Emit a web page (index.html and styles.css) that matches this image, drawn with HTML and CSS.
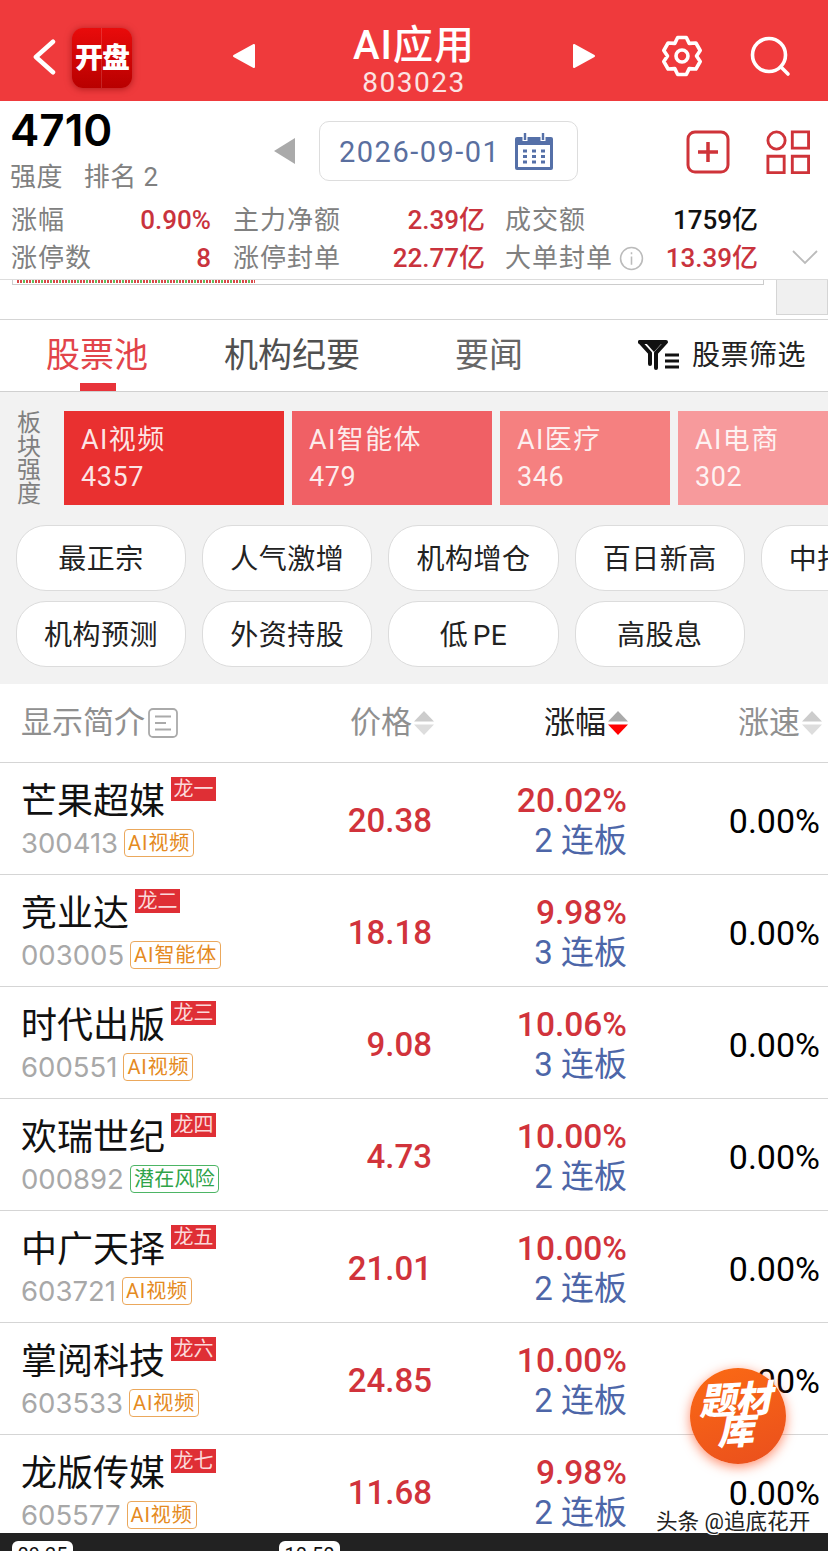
FILE: index.html
```html
<!DOCTYPE html>
<html lang="zh">
<head>
<meta charset="utf-8">
<title>AI应用</title>
<link rel="stylesheet" href="styles.css">
</head>
<body>
<div class="page">
  <header class="topbar">
    <svg class="back" viewBox="0 0 28 40"><path d="M24 3 5 20l19 17" fill="none" stroke="#fff" stroke-width="5" stroke-linecap="round" stroke-linejoin="round"/></svg>
    <div class="logo"><span>开盘</span></div>
    <svg class="tri tri-l" viewBox="0 0 24 26"><path d="M22 2v22L2 13z" fill="#fff" stroke="#fff" stroke-width="2" stroke-linejoin="round"/></svg>
    <div class="title"><div class="title-main">AI应用</div><div class="title-code">803023</div></div>
    <svg class="tri tri-r" viewBox="0 0 24 26"><path d="M2 2v22l20-11z" fill="#fff" stroke="#fff" stroke-width="2" stroke-linejoin="round"/></svg>
    <svg class="gear" viewBox="-22 -22 44 44"><path d="M4.300-18.500 7.200-12.600 13.900-13 18.200-5.500 14.500 0 18.200 5.500 13.900 13 7.200 12.600 4.300 18.500-4.300 18.500-7.200 12.600-13.900 13-18.200 5.500-14.500 0-18.200-5.500-13.900-13-7.200-12.600-4.300-18.500Z" fill="none" stroke="#fff" stroke-width="3.600" stroke-linejoin="round"/><circle r="6" fill="none" stroke="#fff" stroke-width="3.600"/></svg>
    <svg class="search" viewBox="0 0 42 42"><circle cx="19" cy="19" r="16.500" fill="none" stroke="#fff" stroke-width="3.600"/><path d="m31 31 7 7" stroke="#fff" stroke-width="3.600" stroke-linecap="round"/></svg>
  </header>

  <section class="info">
    <div class="info-top">
      <div class="score">
        <div class="score-num">4710</div>
        <div class="score-sub"><span>强度</span><span>排名 2</span></div>
      </div>
      <svg class="date-prev" viewBox="0 0 24 28"><path d="M22 1v26L1 14z" fill="#aaa"/></svg>
      <div class="date">
        <span>2026-09-01</span>
        <svg class="cal" viewBox="0 0 40 38"><path d="M3 5h34a2 2 0 0 1 2 2v29a2 2 0 0 1-2 2H3a2 2 0 0 1-2-2V7a2 2 0 0 1 2-2z" fill="#5570a8"/><rect x="4" y="13" width="32" height="22" fill="#fff"/><path d="M11 1v8M29 1v8" stroke="#fff" stroke-width="5"/><path d="M11 1v7M29 1v7" stroke="#5570a8" stroke-width="2.400"/><path d="M9 19h4M18 19h4M27 19h4M9 24.500h4M18 24.500h4M27 24.500h4M9 30h4M18 30h4M27 30h4" stroke="#5570a8" stroke-width="3"/></svg>
      </div>
      <svg class="add" viewBox="0 0 44 44"><rect x="2" y="2" width="40" height="40" rx="7" fill="none" stroke="#cf3339" stroke-width="3"/><path d="M12 22h20M22 12v20" stroke="#cf3339" stroke-width="3.500"/></svg>
      <svg class="apps" viewBox="0 0 46 46"><circle cx="11" cy="11" r="9" fill="none" stroke="#cf3339" stroke-width="3"/><path d="M27.500 2h17v17h-17zM2 27.500h17v17H2zM27.500 27.500h17v17h-17z" fill="none" stroke="#cf3339" stroke-width="3"/></svg>
    </div>
    <div class="stats-row">
      <div class="stats">
        <div class="stat"><span>涨幅</span><b>0.90%</b></div>
        <div class="stat"><span>主力净额</span><b>2.39亿</b></div>
        <div class="stat"><span>成交额</span><b class="black">1759亿</b></div>
        <div class="stat"><span>涨停数</span><b>8</b></div>
        <div class="stat"><span>涨停封单</span><b>22.77亿</b></div>
        <div class="stat"><span class="with-i">大单封单<svg class="i" viewBox="0 0 24 24"><circle cx="12" cy="12" r="10.500" fill="none" stroke="#bbb" stroke-width="1.500"/><path d="M12 10v8M12 6v2" stroke="#bbb" stroke-width="1.500"/></svg></span><b>13.39亿</b></div>
      </div>
      <svg class="chev" viewBox="0 0 26 16"><path d="m1 2 12 12L25 2" fill="none" stroke="#bbb" stroke-width="1.800"/></svg>
    </div>
  </section>

  <section class="strip">
    <div class="strip-chart"><div class="dots"></div></div>
    <div class="strip-box"></div>
  </section>

  <nav class="tabs">
    <div class="tab tab-a">股票池</div>
    <div class="tab tab-b">机构纪要</div>
    <div class="tab tab-c">要闻</div>
    <div class="filter">
      <svg class="filter-i" viewBox="0 0 42 32"><path d="M2 2h26L18 13v15" fill="none" stroke="#111" stroke-width="4" stroke-linejoin="round" stroke-linecap="round"/><path d="M2 2l10 11v11" fill="none" stroke="#111" stroke-width="4" stroke-linejoin="round" stroke-linecap="round"/><path d="M8 3h16l-8 9z" fill="#111"/><path d="M27 15h14M27 21h14M27 27h14" stroke="#111" stroke-width="2.800"/></svg>
      <span>股票筛选</span>
    </div>
  </nav>

  <section class="board">
    <div class="sectors">
      <div class="sector-label">板块强度</div>
      <div class="tile t1"><span class="tile-n">AI视频</span><span>4357</span></div>
      <div class="tile t2"><span class="tile-n">AI智能体</span><span>479</span></div>
      <div class="tile t3"><span class="tile-n">AI医疗</span><span>346</span></div>
      <div class="tile t4"><span class="tile-n">AI电商</span><span>302</span></div>
    </div>
    <div class="pills">
      <div class="pill">最正宗</div><div class="pill">人气激增</div><div class="pill">机构增仓</div><div class="pill">百日新高</div><div class="pill">中报预增</div>
    </div>
    <div class="pills">
      <div class="pill">机构预测</div><div class="pill">外资持股</div><div class="pill pill-pe">低 PE</div><div class="pill">高股息</div>
    </div>
  </section>

  <div class="thead">
    <div class="th th-name"><span>显示简介</span><svg class="list-i" viewBox="0 0 30 30"><rect x="1" y="1" width="28" height="28" rx="4" fill="none" stroke="#aaa" stroke-width="1.800"/><path d="M7 8.500h16M7 15h11M7 21.500h16" stroke="#aaa" stroke-width="1.800"/></svg></div>
    <div class="th"><span>价格</span><svg class="sort" viewBox="0 0 20 24"><path d="M10 0l10 10.500H0z" fill="#ccc"/><path d="M10 24 0 13.500h20z" fill="#ddd"/></svg></div>
    <div class="th th-on"><span>涨幅</span><svg class="sort" viewBox="0 0 20 24"><path d="M10 0l10 10.500H0z" fill="#aaa"/><path d="M10 24 0 13.500h20z" fill="#f00"/></svg></div>
    <div class="th"><span>涨速</span><svg class="sort" viewBox="0 0 20 24"><path d="M10 0l10 10.500H0z" fill="#ccc"/><path d="M10 24 0 13.500h20z" fill="#ddd"/></svg></div>
  </div>

  <div class="list">
    <div class="row">
      <div class="name"><div class="name-line"><span class="n">芒果超媒</span><span class="rank">龙一</span></div><div class="code-line"><span class="code">300413</span><span class="tag">AI视频</span></div></div>
      <div class="price">20.38</div>
      <div class="chg"><div>20.02%</div><div class="boards">2 连板</div></div>
      <div class="speed">0.00%</div>
    </div>
    <div class="row">
      <div class="name"><div class="name-line"><span class="n">竞业达</span><span class="rank">龙二</span></div><div class="code-line"><span class="code">003005</span><span class="tag">AI智能体</span></div></div>
      <div class="price">18.18</div>
      <div class="chg"><div>9.98%</div><div class="boards">3 连板</div></div>
      <div class="speed">0.00%</div>
    </div>
    <div class="row">
      <div class="name"><div class="name-line"><span class="n">时代出版</span><span class="rank">龙三</span></div><div class="code-line"><span class="code">600551</span><span class="tag">AI视频</span></div></div>
      <div class="price">9.08</div>
      <div class="chg"><div>10.06%</div><div class="boards">3 连板</div></div>
      <div class="speed">0.00%</div>
    </div>
    <div class="row">
      <div class="name"><div class="name-line"><span class="n">欢瑞世纪</span><span class="rank">龙四</span></div><div class="code-line"><span class="code">000892</span><span class="tag tag-green">潜在风险</span></div></div>
      <div class="price">4.73</div>
      <div class="chg"><div>10.00%</div><div class="boards">2 连板</div></div>
      <div class="speed">0.00%</div>
    </div>
    <div class="row">
      <div class="name"><div class="name-line"><span class="n">中广天择</span><span class="rank">龙五</span></div><div class="code-line"><span class="code">603721</span><span class="tag">AI视频</span></div></div>
      <div class="price">21.01</div>
      <div class="chg"><div>10.00%</div><div class="boards">2 连板</div></div>
      <div class="speed">0.00%</div>
    </div>
    <div class="row">
      <div class="name"><div class="name-line"><span class="n">掌阅科技</span><span class="rank">龙六</span></div><div class="code-line"><span class="code">603533</span><span class="tag">AI视频</span></div></div>
      <div class="price">24.85</div>
      <div class="chg"><div>10.00%</div><div class="boards">2 连板</div></div>
      <div class="speed">0.00%</div>
    </div>
    <div class="row">
      <div class="name"><div class="name-line"><span class="n">龙版传媒</span><span class="rank">龙七</span></div><div class="code-line"><span class="code">605577</span><span class="tag">AI视频</span></div></div>
      <div class="price">11.68</div>
      <div class="chg"><div>9.98%</div><div class="boards">2 连板</div></div>
      <div class="speed">0.00%</div>
    </div>
  </div>

  <footer class="bottom">
    <span class="time t-a">09:25</span>
    <span class="time t-b">10:50</span>
  </footer>

  <div class="fab"><span>题材</span><span>库</span></div>
  <div class="mark">头条 @追底花开</div>
</div>
</body>
</html>
```
FILE: styles.css
```css
* { box-sizing: border-box; }
html, body { margin: 0; padding: 0; }
body { background: #fff; font-family: "Roboto", "Noto Sans CJK SC", sans-serif; color: #111; }
.page { position: relative; width: 828px; height: 1551px; overflow: hidden; display: flex; flex-direction: column; }

/* top bar */
.topbar { position: relative; flex: none; height: 101px; background: #ef3a3c; display: flex; align-items: center; }
.back { width: 26px; height: 36px; margin: 13px 0 0 31px; flex: none; }
.logo { width: 60px; height: 60px; margin: 14px 0 0 15px; padding-bottom: 4px; flex: none; border-radius: 11px; background: linear-gradient(90deg, transparent 29px, rgba(255,255,255,.14) 29px 30px, transparent 30px), linear-gradient(#e90b0b, #b80000); box-shadow: 0 1px 7px rgba(120,0,0,.55); display: flex; align-items: center; justify-content: center; }
.logo span { color: #fff; font-size: 28px; font-weight: 900; letter-spacing: -1px; white-space: nowrap; }
.tri { width: 24px; height: 26px; flex: none; margin-top: 11px; }
.tri-l { margin-left: 100px; }
.title { width: 316px; flex: none; color: #fff; text-align: center; padding-top: 19px; }
.title-main { font-size: 40px; line-height: 45px; font-weight: 500; letter-spacing: 1px; }
.title-code { font-size: 28px; line-height: 30px; letter-spacing: 1.500px; color: #fbe3e3; }
.gear { width: 44px; height: 44px; flex: none; margin: 11px 0 0 64px; }
.search { width: 42px; height: 42px; flex: none; margin: 13px 0 0 46px; }

/* summary */
.info { flex: none; height: 178px; display: flex; flex-direction: column; }
.info-top { height: 100px; display: flex; align-items: flex-start; }
.score { width: 262px; flex: none; padding-left: 10px; }
.score-num { font-family: "Inter", "Roboto", sans-serif; font-size: 44px; line-height: 52px; font-weight: 600; color: #000; margin-top: 3px; }
.score-sub { display: flex; gap: 21px; font-size: 26px; line-height: 36px; color: #808080; margin-top: 3px; letter-spacing: .4px; }
.date-prev { width: 24px; height: 28px; flex: none; margin: 36px 0 0 11px; }
.date { width: 259px; height: 60px; margin: 20px 0 0 22px; padding: 1px 0 0 19px; flex: none; border: 1px solid #ddd; border-radius: 10px; display: flex; align-items: center; color: #5a6f9f; font-size: 29px; letter-spacing: 1.500px; }
.cal { width: 40px; height: 38px; margin: -1px 0 0 14px; flex: none; }
.add { width: 44px; height: 44px; flex: none; margin: 29px 0 0 108px; }
.apps { width: 44px; height: 44px; flex: none; margin: 29px 0 0 36px; }
.stats-row { display: flex; align-items: flex-start; }
.stats { margin: 1px 0 0 11px; display: grid; grid-template-columns: 222px 272px 253px; flex: none; }
.stat { height: 37.500px; display: flex; justify-content: space-between; align-items: center; font-size: 26px; line-height: 37px; }
.stat:nth-child(3n+1) { padding-right: 22px; }
.stat:nth-child(3n+2) { padding-right: 20px; }
.stat span { color: #808080; letter-spacing: 1px; }
.stat b { color: #c9333d; font-weight: 500; }
.stat b.black { color: #111; }
.with-i { display: flex; align-items: center; gap: 6px; }
.i { width: 25px; height: 25px; flex: none; }
.chev { width: 26px; height: 16px; flex: none; margin: 48px 0 0 34px; }

/* chart strip */
.strip { flex: none; height: 41px; border-top: 1px solid #ddd; border-bottom: 1px solid #d5d5d5; display: flex; align-items: flex-start; }
.strip-chart { width: 752px; height: 5px; margin-left: 12px; border: 1px solid #ccc; border-top: 0; flex: none; }
.dots { width: 238px; height: 3px; margin-left: 4px; background: repeating-linear-gradient(90deg, #d94848 0 2px, #fff 2px 3px, #d94848 3px 5px, #fff 5px 6px, #5cc05c 6px 8px, #fff 8px 9px); }
.strip-box { width: 52px; height: 35px; margin-left: 12px; background: #f0f0f0; border: 1px solid #d5d5d5; border-top: 0; flex: none; }

/* tabs */
.tabs { flex: none; height: 72px; border-bottom: 1px solid #d0d0d0; display: flex; align-items: flex-start; }
.tab { font-size: 34px; line-height: 70px; height: 71px; color: #505050; flex: none; }
.tab-a { margin-left: 46px; color: #e2444a; position: relative; }
.tab-a::after { content: ""; position: absolute; left: 34px; right: 32px; bottom: 0; height: 8px; background: #e8333a; }
.tab-b { margin-left: 76px; }
.tab-c { margin-left: 95px; color: #666; }
.filter { margin-left: 115px; height: 71px; display: flex; align-items: center; gap: 12px; font-size: 28px; letter-spacing: .5px; line-height: 70px; color: #222; flex: none; }
.filter-i { width: 42px; height: 32px; flex: none; }

/* board */
.board { flex: none; height: 292px; background: #f2f2f2; overflow: hidden; padding-top: 19px; }
.sectors { display: flex; gap: 8px; height: 94px; }
.sector-label { width: 56px; flex: none; padding: 1px 15px 0 17px; font-size: 24px; line-height: 23.500px; color: #808080; }
.tile { flex: none; height: 94px; padding: 11px 0 0 17px; color: #fff; font-size: 27px; line-height: 37px; display: flex; flex-direction: column; letter-spacing: .6px; }
.tile span { color: rgba(255,255,255,.88); }
.tile .tile-n { letter-spacing: 1.400px; }
.t1 { width: 220px; background: #e93030; }
.t2 { width: 200px; background: #f06065; }
.t3 { width: 170px; background: #f58080; }
.t4 { width: 170px; background: #f79a9c; }
.pills { display: flex; gap: 16px; padding-left: 16px; margin-top: 10px; width: 1000px; }
.sectors + .pills { margin-top: 20px; }
.pill { width: 170.200px; height: 66px; padding-bottom: 2px; flex: none; background: #fff; border: 1px solid #dcdcdc; border-radius: 30px; display: flex; align-items: center; justify-content: center; font-size: 28px; letter-spacing: .5px; color: #222; }
.pill-pe { word-spacing: -3px; }

/* table */
.thead { flex: none; height: 79px; border-bottom: 1px solid #d5d5d5; display: grid; grid-template-columns: 283px 130px 194px 194px; padding-left: 21px; align-items: center; }
.th { display: flex; justify-content: flex-end; align-items: center; gap: 2px; font-size: 31px; line-height: 40px; color: #909090; }
.th-name { justify-content: flex-start; gap: 3px; }
.th-on { color: #222; }
.list-i { width: 30px; height: 30px; flex: none; }
.sort { width: 20px; height: 24px; flex: none; }
.list { flex: 1; overflow: hidden; }
.row { height: 112px; padding: 4px 0 0 21px; border-bottom: 1px solid #d5d5d5; display: grid; grid-template-columns: 281px 130px 195px 193px; align-items: center; }
.name { margin-top: -2px; }
.name-line { display: flex; align-items: flex-start; height: 48px; }
.n { font-size: 36px; line-height: 48px; color: #111; }
.rank { width: 45px; height: 24px; margin: -1px 0 0 6px; background: #df2f35; color: #fbd9da; font-size: 20px; line-height: 24px; text-align: center; }
.code-line { display: flex; align-items: center; height: 38px; margin-top: -2px; gap: 6px; }
.code { font-family: "Inter", "Roboto", sans-serif; font-size: 27.500px; color: #a8a8a8; }
.tag { height: 28px; padding: 0 3px; border: 1px solid #eba85c; border-radius: 4px; color: #e58a22; font-size: 20px; letter-spacing: .9px; line-height: 26px; white-space: nowrap; }
.tag-green { border-color: #4db565; color: #2ea348; letter-spacing: .3px; }
.price { text-align: right; font-size: 33px; line-height: 40px; font-weight: 500; color: #d1333b; }
.chg { text-align: right; font-size: 33.500px; line-height: 40px; color: #d1333b; font-weight: 500; }
.boards { color: #4d66a8; font-weight: 400; font-size: 33px; }
.speed { text-align: right; font-size: 34px; line-height: 40px; color: #000; }

/* bottom */
.bottom { flex: none; height: 18px; background: #222; display: flex; overflow: hidden; padding: 8px 0 0 12px; }
.time { flex: none; width: 61px; height: 30px; background: #fff; border-radius: 6px; color: #111; font-size: 20px; line-height: 28px; text-align: center; }
.t-b { margin-left: 206px; }

/* overlays */
.fab { position: absolute; left: 690px; top: 1368px; width: 96px; height: 96px; border-radius: 50%; background: linear-gradient(160deg, #fb6a14, #ea4f1d); box-shadow: 0 3px 12px rgba(255,80,30,.65); display: flex; flex-direction: column; align-items: center; justify-content: center; color: #fff; font-weight: 900; font-size: 37px; line-height: 31px; letter-spacing: -1px; }
.fab span { display: block; transform: rotate(-3deg) skewX(-14deg); }
.mark { position: absolute; left: 656px; top: 1509px; font-size: 21.600px; line-height: 26px; color: #222; text-shadow: 1px 1px 0 #fff, -1px -1px 0 #fff, 1px -1px 0 #fff, -1px 1px 0 #fff; white-space: nowrap; }
```
